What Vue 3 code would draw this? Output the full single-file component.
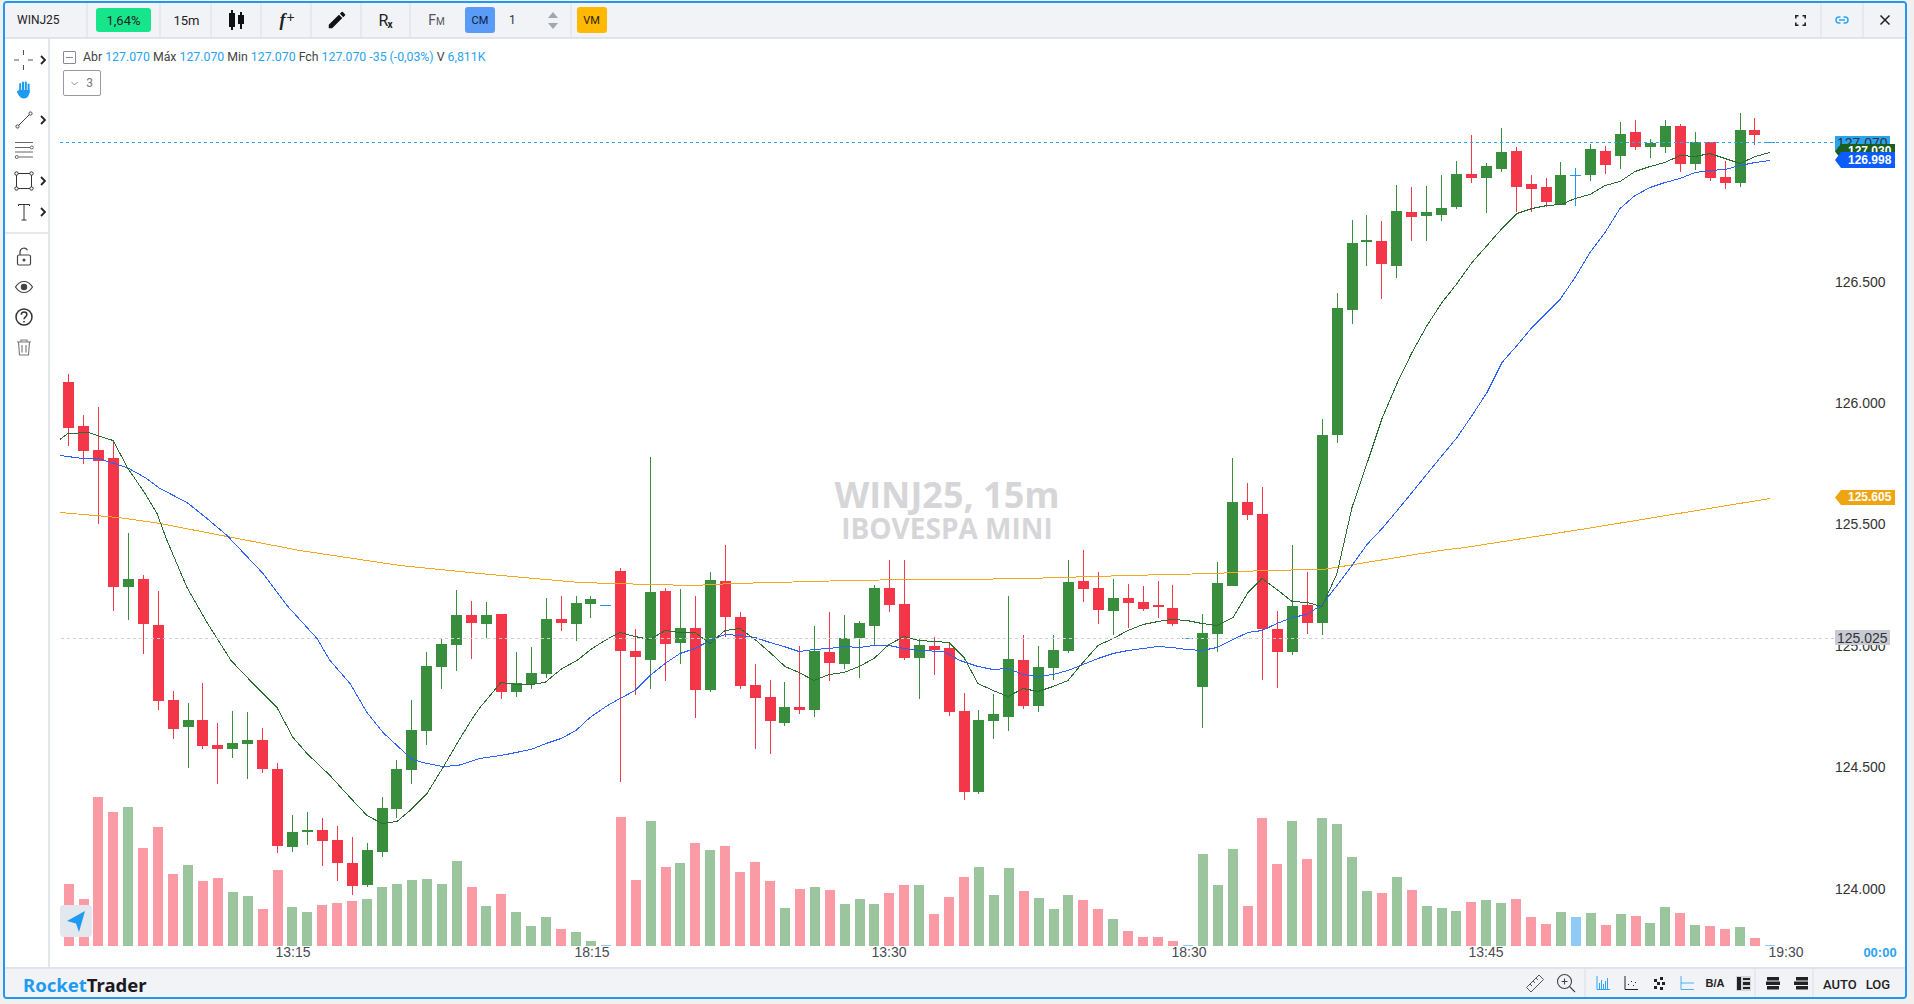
<script setup>
const raw = [
[374,446,382,428,'r'],[415,464,426,451,'r'],[407,524,450,461,'r'],[440,611,458,587,'r'],[533,620,579,587,'g'],[575,654,579,624,'r'],[591,710,625,701,'r'],
[691,739,700,729,'r'],[703,768,720,727,'g'],[683,749,720,746,'r'],[723,784,745,749,'r'],[711,758,743,749,'g'],[712,779,740,744,'g'],[728,773,740,769,'r'],
[763,853,769,846,'r'],[815,852,832,847,'g'],[812,845,830,832,'g'],[818,866,830,841,'r'],[826,881,840,863,'r'],[837,895,863,886,'r'],[843,887,850,885,'g'],
[797,857,808,852,'g'],[760,818,769,809,'g'],[700,784,730,770,'g'],[652,745,666,731,'g'],[638,689,644,667,'g'],[590,671,615,645,'g'],[601,659,615,623,'r'],
[602,638,615,624,'g'],[614,699,614,692,'r'],[652,697,683,692,'g'],[647,689,673,684,'g'],[598,678,619,674,'g'],[596,631,619,623,'r'],[596,641,603,624,'g'],
[596,618,599,604,'g'],[605,605,605,606,'b'],[568,782,571,651,'r'],[629,695,651,657,'r'],[457,689,592,660,'g'],[588,681,591,644,'r'],[589,664,628,643,'g'],
[596,718,628,690,'r'],[572,692,580,690,'g'],[545,637,581,617,'r'],[612,689,617,686,'r'],[664,749,685,698,'r'],[680,754,697,721,'r'],[682,726,707,723,'g'],
[646,714,707,710,'r'],[626,717,651,710,'g'],[612,681,652,663,'r'],[615,669,638,664,'g'],[621,678,623,638,'g'],[585,646,588,626,'g'],[560,612,588,605,'r'],
[560,660,604,658,'r'],[638,699,645,658,'g'],[637,675,646,650,'r'],[642,716,648,712,'r'],[693,800,711,792,'r'],[710,794,720,792,'g'],[694,739,714,721,'g'],
[596,731,659,717,'g'],[635,709,660,706,'r'],[646,712,667,706,'g'],[635,680,650,668,'g'],[560,653,582,651,'g'],[550,602,581,589,'r'],[572,624,588,610,'r'],
[579,635,598,611,'g'],[584,628,598,603,'r'],[586,611,602,609,'r'],[581,618,605,607,'r'],[585,626,608,624,'r'],[638,638,638,639,'b'],[614,728,633,687,'g'],
[562,652,583,634,'g'],[458,586,502,586,'g'],[483,520,502,515,'r'],[487,680,514,629,'r'],[611,688,629,652,'r'],[545,655,606,652,'g'],[572,634,605,623,'r'],
[419,635,435,623,'g'],[293,443,308,435,'g'],[220,324,243,310,'g'],[215,266,240,242,'g'],[221,299,241,264,'r'],[185,278,211,266,'g'],[187,241,212,217,'r'],
[186,241,212,216,'g'],[175,221,208,215,'g'],[161,209,174,207,'g'],[135,183,174,178,'r'],[163,213,166,178,'g'],[128,172,152,169,'g'],[147,212,151,187,'r'],
[175,212,184,189,'r'],[178,207,187,202,'r'],[162,205,175,205,'g'],[168,206,175,176,'b'],[144,181,149,175,'g'],[146,174,151,165,'r'],[122,169,134,156,'g'],
[120,150,132,147,'r'],[139,158,143,147,'g'],[120,153,126,147,'g'],[124,172,126,164,'r'],[132,170,142,164,'g'],[142,181,142,178,'r'],[161,189,177,183,'r'],
[113,187,130,183,'g'],[118,145,130,135,'r'],[142,142,142,143,'b']
]
const volTops = [884,899,797,812,807,848,827,874,865,881,878,892,896,909,870,907,912,905,903,901,899,887,884,880,879,884,861,887,
906,894,912,926,917,929,932,941,945,817,880,821,867,863,843,850,846,872,862,881,908,889,887,890,904,899,904,893,885,885,914,897,
877,867,895,868,891,898,909,895,900,909,919,931,937,937,941,945,854,885,849,906,818,864,821,859,818,824,857,891,893,877,890,906,908,
911,902,900,903,899,917,924,912,917,913,925,914,916,923,907,913,925,926,929,927,938,945]
const colors = { r: '#f43649', g: '#388e3c', b: '#2196f3' }

const candles = raw.map((r, i) => ({
  i,
  x: 68 + 15 * i - Math.floor((i + 4) / 13),
  wickTop: r[0], wickH: r[1] - r[0],
  bodyTop: r[2], bodyH: r[3] - r[2],
  color: colors[r[4]]
}))
const volumes = volTops.map((top, i) => ({
  i,
  x: 64 + 15 * i - Math.floor((i + 11) / 13),
  top, h: 946 - top,
  color: colors[raw[i][4]]
}))

const greenLine = '60,439 68,433 88,432 113,440 128,468 145,493 157,513 167,540 187,587 207,622 231,660 253,683 277,707 293,737 307,753 330,775 350,797 367,815 382,823 397,821 410,810 427,793 443,767 460,738 473,717 480,707 501,682 517,684 531,684 545,682 562,668 577,660 592,648 610,637 620,632 635,636 650,639 665,630 680,632 695,632 710,643 725,630 740,628 755,639 770,652 785,666 799,672 814,680 829,674 844,672 859,666 874,658 889,644 904,636 919,640 934,641 949,642 960,653 964,657 978,683 993,690 1008,696 1023,688 1038,691 1053,686 1068,680 1083,662 1098,645 1113,638 1128,630 1143,624 1158,621 1172,619 1187,620 1202,623 1217,625 1233,617 1248,592 1262,578 1277,589 1292,601 1307,602 1322,606 1337,573 1352,507 1368,460 1382,418 1397,383 1412,352 1427,325 1442,302 1457,283 1472,262 1487,245 1502,228 1517,213 1532,208 1547,205 1561,204 1575,198 1590,194 1605,185 1620,181 1635,171 1650,166 1665,162 1680,155 1695,156 1710,153 1725,158 1740,163 1755,156 1770,152'
const blueLine = '60,455 83,458 98,458 127,467 145,477 160,488 187,502 207,518 227,535 263,573 287,605 317,638 330,660 350,683 367,712 383,732 412,759 427,763 443,766 458,765 480,758 501,755 531,749 546,743 561,738 576,730 590,717 606,706 620,698 635,690 650,675 665,663 680,653 695,648 710,640 725,634 740,635 755,637 770,642 784,646 799,651 814,649 829,648 844,646 859,647 874,645 889,645 904,648 919,650 944,651 960,660 978,666 993,669 1008,668 1023,674 1038,676 1053,674 1068,670 1083,664 1098,658 1113,653 1128,650 1143,648 1158,646 1172,647 1187,649 1202,650 1217,647 1233,639 1248,632 1262,630 1277,623 1292,617 1307,614 1322,604 1337,585 1352,565 1367,544 1383,527 1403,503 1438,460 1457,437 1472,415 1487,392 1502,362 1517,345 1532,327 1560,299 1575,277 1590,252 1605,232 1620,208 1635,195 1650,187 1665,182 1680,178 1695,172 1710,170 1725,169 1740,165 1755,162 1770,160'
const orangeLine = '60,512 118,517 160,523 227,536 300,550 400,565 480,573 523,577 580,582 613,583 693,585 733,583 813,581 847,580 913,579 960,579 1027,578 1093,576 1167,574 1217,573 1260,570 1323,569 1360,563 1440,550 1465,547 1587,528 1709,508 1770,498'

const axis = [
  { t: '126.500', y: 287 }, { t: '126.000', y: 408 }, { t: '125.500', y: 529 },
  { t: '125.000', y: 651 }, { t: '124.500', y: 772 }, { t: '124.000', y: 894 }
]
const times = [
  { t: '13:15', x: 293 }, { t: '18:15', x: 592 }, { t: '13:30', x: 889 },
  { t: '18:30', x: 1189 }, { t: '13:45', x: 1486 }, { t: '19:30', x: 1786 }
]
const tags = [
  { t: '127.030', y: 144, h: 15, c: '#1b5e20' },
  { t: '126.998', y: 152, h: 16, c: '#0d5cff' },
  { t: '125.605', y: 490, h: 15, c: '#efa512' }
]
const tagPath = (y, h) => `M1835 ${y + h / 2}L1841 ${y}H1895V${y + h}H1841Z`
</script>

<template>
  <div class="page">
    <div class="frame">
      <header class="topbar">
        <div class="cell c-symbol"><span class="symbol">WINJ25</span></div>
        <div class="cell c-pct"><span class="pct">1,64%</span></div>
        <div class="cell c-tf"><span class="tf">15m</span></div>
        <div class="cell c-icon">
          <svg class="nudge" width="18" height="22" viewBox="0 0 18 22">
            <rect x="3" y="1" width="2" height="20" fill="#111" />
            <rect x="1" y="4" width="6" height="14" fill="#111" />
            <rect x="12" y="3" width="2" height="17" fill="#111" />
            <rect x="10" y="6" width="6" height="9" fill="#111" />
          </svg>
        </div>
        <div class="cell c-icon"><span class="fx"><i>f</i><b>+</b></span></div>
        <div class="cell c-icon">
          <svg class="nudge" width="22" height="22" viewBox="0 0 24 24"><path fill="#111" d="M3 17.25V21h3.75L17.81 9.94l-3.75-3.75L3 17.25zM20.71 7.04a1 1 0 0 0 0-1.41l-2.34-2.34a1 1 0 0 0-1.41 0l-1.83 1.83 3.75 3.75 1.83-1.83z" /></svg>
        </div>
        <div class="cell c-icon c-rx"><span class="rx">R<sub>x</sub></span></div>
        <div class="cell c-fm"><span class="fm">F<small>M</small></span></div>
        <div class="cell c-group">
          <span class="btn btn-cm">CM</span>
          <span class="qty">1</span>
          <span class="spin"><i class="up"></i><i class="down"></i></span>
        </div>
        <div class="cell c-vm"><span class="btn btn-vm">VM</span></div>
        <div class="spacer"></div>
        <div class="cell c-right">
          <svg width="11" height="11" viewBox="0 0 11 11" fill="none" stroke="#222" stroke-width="1.6"><path d="M.8 3.500V.8h2.700M7.500.8h2.700v2.700M10.200 7.500v2.700H7.500M3.500 10.200H.8V7.500" /></svg>
        </div>
        <div class="cell c-right">
          <svg width="14" height="8" viewBox="0 0 14 8" fill="none" stroke="#2ba6f3" stroke-width="1.500"><path d="M5.500 1H4a3 3 0 0 0 0 6h1.500M8.500 1H10a3 3 0 0 1 0 6H8.500M4 4h6" /></svg>
        </div>
        <div class="cell c-right c-last">
          <svg width="12" height="12" viewBox="0 0 12 12" fill="none" stroke="#222" stroke-width="1.5"><path d="M1.500 1.500l9 9M10.500 1.500l-9 9" /></svg>
        </div>
      </header>

      <div class="main">
        <aside class="rail">
          <div class="tool">
            <svg class="ico" viewBox="0 0 20 20" fill="none" stroke="#555" stroke-width="1"><path d="M0 10h5M14 10h5M9.500 0v5M9.500 15v5" /></svg>
            <svg class="chev" viewBox="0 0 6 10" fill="none" stroke="#222" stroke-width="1.8"><path d="M1 1l4 4-4 4" /></svg>
          </div>
          <div class="tool">
            <svg class="ico" viewBox="0 0 20 20" fill="#1e9af0">
              <rect x="5.200" y="3" width="2" height="10" rx="1" />
              <rect x="8" y="1.500" width="2" height="11" rx="1" />
              <rect x="10.800" y="1.500" width="2" height="11" rx="1" />
              <rect x="13.600" y="3.500" width="2" height="10" rx="1" />
              <path d="M5 10h10.600c.2 5-2.200 8.500-5.600 8.500C7 18.500 5.600 16.800 3.800 13.800 2.600 11.800 3 10.600 4 10.800z" />
            </svg>
          </div>
          <div class="tool">
            <svg class="ico" viewBox="0 0 20 20" fill="#fff" stroke="#444" stroke-width="1"><path d="M4 16L16 4" /><circle cx="3.500" cy="16.500" r="1.600" /><circle cx="16.500" cy="3.500" r="1.600" /></svg>
            <svg class="chev" viewBox="0 0 6 10" fill="none" stroke="#222" stroke-width="1.8"><path d="M1 1l4 4-4 4" /></svg>
          </div>
          <div class="tool">
            <svg class="ico" viewBox="0 0 20 20" fill="#fff" stroke="#666" stroke-width="1"><path d="M1 2.500h18M1 7.500h15M1 12h18M5 17h14" /><circle cx="17.800" cy="7.500" r="1.500" /><circle cx="2.800" cy="17" r="1.500" /></svg>
          </div>
          <div class="tool t-down">
            <svg class="ico" viewBox="0 0 20 20" fill="#fff" stroke="#333" stroke-width="1"><rect x="2.500" y="2.500" width="15" height="15" /><circle cx="2.500" cy="2.500" r="1.700" /><circle cx="17.500" cy="2.500" r="1.700" /><circle cx="2.500" cy="17.500" r="1.700" /><circle cx="17.500" cy="17.500" r="1.700" /></svg>
            <svg class="chev" viewBox="0 0 6 10" fill="none" stroke="#222" stroke-width="1.8"><path d="M1 1l4 4-4 4" /></svg>
          </div>
          <div class="tool t-down">
            <svg class="ico" viewBox="0 0 20 20" fill="none" stroke="#333" stroke-width="1"><path d="M4.500 4V2.500h11V4M10 2.500V18M7.500 18h5" /></svg>
            <svg class="chev" viewBox="0 0 6 10" fill="none" stroke="#222" stroke-width="1.8"><path d="M1 1l4 4-4 4" /></svg>
          </div>
          <div class="sep"></div>
          <div class="tool">
            <svg class="ico" viewBox="0 0 20 20" fill="none" stroke="#444" stroke-width="1.200"><rect x="3.500" y="8" width="13" height="10" rx="1.500" /><path d="M6 8V5a4 4 0 0 1 7.500-1.800" /><circle cx="10" cy="13" r=".9" fill="#444" /></svg>
          </div>
          <div class="tool">
            <svg class="ico" viewBox="0 0 20 20" fill="none" stroke="#444" stroke-width="1.200"><path d="M1.500 10C4 6 7 4.500 10 4.500S16 6 18.500 10C16 14 13 15.500 10 15.500S4 14 1.500 10z" /><circle cx="10" cy="10" r="2.600" fill="#444" /></svg>
          </div>
          <div class="tool">
            <svg class="ico" viewBox="0 0 20 20" fill="none" stroke="#333" stroke-width="1.500"><circle cx="10" cy="10" r="8" /><path d="M7.300 7.800c0-1.700 1.200-2.800 2.800-2.800s2.800 1 2.800 2.500c0 2.300-2.900 2.300-2.900 4.700" /><path d="M10 14v1.400" /></svg>
          </div>
          <div class="tool">
            <svg class="ico" viewBox="0 0 20 20" fill="none" stroke="#777" stroke-width="1.100"><path d="M3 5h14M7 5V3h6v2M4.500 5l1 13h9l1-13M8 8v7.500M12 8v7.500" /></svg>
          </div>
        </aside>

        <div class="chart">
          <svg class="canvas" viewBox="50 39 1855 928" width="1855" height="928">
            <text class="wm1" x="947" y="508" text-anchor="middle">WINJ25, 15m</text>
            <text class="wm2" x="947" y="539" text-anchor="middle">IBOVESPA MINI</text>

            <g shape-rendering="crispEdges">
              <rect v-for="v in volumes" :key="'v' + v.i" :x="v.x" :y="v.top" width="10" :height="v.h" :fill="v.color" fill-opacity=".5" />
              <g v-for="c in candles" :key="'c' + c.i">
                <rect :x="c.x" :y="c.wickTop" width="1" :height="c.wickH" :fill="c.color" />
                <rect :x="c.x - 5" :y="c.bodyTop" width="11" :height="c.bodyH" :fill="c.color" />
              </g>
              <g transform="translate(0 .5)" fill="none" stroke-width="1">
                <polyline :points="orangeLine" stroke="#f5a623" />
                <polyline :points="blueLine" stroke="#2962ff" />
                <polyline :points="greenLine" stroke="#2b6e2f" />
              </g>
              <line x1="60" y1="142.500" x2="1835" y2="142.500" stroke="#29a9f5" stroke-dasharray="3 3" />
              <line x1="61" y1="638.500" x2="1835" y2="638.500" stroke="#cfcfd4" stroke-dasharray="3 3" />
            </g>

            <text v-for="a in axis" :key="a.t" class="axis" x="1835" :y="a.y">{{ a.t }}</text>
            <text v-for="t in times" :key="t.t" class="time" :x="t.x" y="957" text-anchor="middle">{{ t.t }}</text>
            <text class="clock" x="1880" y="957" text-anchor="middle">00:00</text>

            <rect x="1835" y="136" width="55" height="15" fill="#2aa3f0" />
            <text class="axis" x="1837" y="148">127.070</text>
            <g v-for="tag in tags" :key="tag.t">
              <path :d="tagPath(tag.y, tag.h)" :fill="tag.c" />
              <text class="tagtext" x="1848" :y="tag.y + tag.h - 4">{{ tag.t }}</text>
            </g>
            <rect x="1835" y="630" width="55" height="15" fill="#c8cbd3" />
            <text class="axis" x="1837" y="643">125.025</text>
          </svg>

          <div class="legend">
            <span class="collapse"></span>
            <span class="ohlc">
              Abr <em>127.070</em> Máx <em>127.070</em> Min <em>127.070</em> Fch <em>127.070 -35 (-0,03%)</em> V <em>6,811K</em>
            </span>
          </div>
          <div class="more">
            <svg width="7" height="5" viewBox="0 0 7 5" fill="none" stroke="#888" stroke-width="1"><path d="M.5 1l3 3 3-3" /></svg>
            <span>3</span>
          </div>
          <div class="nav">
            <svg width="20" height="22" viewBox="0 0 20 22"><path fill="#1e9af0" d="M1 11L19 1l-6 21-3-8.500z" /></svg>
          </div>
        </div>
      </div>

      <footer class="bottombar">
        <div class="logo"><span class="rocket">Rocket</span><span>Trader</span></div>
        <div class="spacer"></div>
        <div class="bcell b-tools">
          <svg width="20" height="20" viewBox="0 0 20 20" fill="none" stroke="#555" stroke-width="1"><path d="M1.500 14.500L14 2l4.500 4.500L6 19zM5 11l2 2M8 8l2 2M11 5l2 2" /></svg>
          <svg width="20" height="20" viewBox="0 0 20 20" fill="none" stroke="#444" stroke-width="1.100"><circle cx="8.500" cy="8.500" r="7" /><path d="M13.500 13.500l5.500 5.500M8.500 5.500v6M5.500 8.500h6" /></svg>
        </div>
        <div class="bcell b-chart">
          <svg width="14" height="14" viewBox="0 0 14 14" fill="none" stroke="#2ba6f3" stroke-width="1"><path d="M1 0v13.500h13M3.500 7v6M5.500 4v9M7.500 8v5M9.500 5v8M11.500 2v11" /></svg>
          <svg width="14" height="14" viewBox="0 0 14 14" fill="none" stroke="#222" stroke-width="1"><path d="M1 0v13.500h13M4 8l1 1M7 5l1 1M9 9l1 1M11 6l1 1" /></svg>
          <svg width="14" height="14" viewBox="0 0 14 14" fill="#222"><rect x="2" y="3" width="3" height="3" /><rect x="8" y="1" width="3" height="3" /><rect x="5" y="6" width="3" height="3" /><rect x="10" y="6" width="3" height="3" /><rect x="2" y="10" width="3" height="3" /><rect x="8" y="11" width="3" height="3" /></svg>
          <svg width="14" height="14" viewBox="0 0 14 14" fill="none" stroke="#2ba6f3" stroke-width="1"><path d="M1 0v13.500h13M1 7h13" stroke-opacity=".85" /></svg>
          <span class="ba">B/A</span>
          <span class="panel"><svg width="13" height="13" viewBox="0 0 13 13" fill="#222"><rect x="0" y="0" width="4" height="13" /><rect x="6" y="1" width="7" height="2" /><rect x="6" y="5" width="7" height="3" /><rect x="6" y="10" width="7" height="2" /></svg></span>
        </div>
        <div class="bcell b-stack">
          <svg width="14" height="13" viewBox="0 0 14 13" fill="#222"><rect x="1" y="0" width="12" height="3.500" /><rect x="0" y="4.500" width="14" height="3.500" /><rect x="1" y="9" width="12" height="3.500" /></svg>
          <svg width="14" height="13" viewBox="0 0 14 13" fill="#222"><rect x="2" y="0" width="12" height="3.500" /><rect x="0" y="4.500" width="14" height="3.500" /><rect x="2" y="9" width="12" height="3.500" /></svg>
        </div>
        <div class="bcell b-scale"><span>AUTO</span><span>LOG</span></div>
      </footer>
    </div>
  </div>
</template>

<style>
html, body { margin: 0; padding: 0; background: #f0f0f0; }
</style>

<style scoped>
.page {
  width: 1914px;
  height: 1004px;
  box-sizing: border-box;
  padding: 1px 7px 5px 3px;
  background: #f0f0f0;
  overflow: hidden;
  font-family: Roboto, "Liberation Sans", sans-serif;
  color: #222;
}
.frame {
  height: 100%;
  box-sizing: border-box;
  border: 2px solid #2196f3;
  border-radius: 4px;
  background: #fff;
  display: flex;
  flex-direction: column;
  overflow: hidden;
}
.topbar {
  flex: 0 0 36px;
  box-sizing: border-box;
  display: flex;
  background: #f2f3f7;
  border-bottom: 2px solid #e0e3eb;
}
.cell {
  box-sizing: border-box;
  height: 34px;
  border-right: 2px solid #e6e8ee;
  display: flex;
  align-items: center;
  justify-content: center;
  flex: none;
}
.c-symbol { width: 83px; justify-content: flex-start; padding-left: 12px; }
.symbol { font-size: 12px; }
.c-pct { width: 73px; }
.pct {
  width: 55px;
  height: 24px;
  display: flex;
  align-items: center;
  justify-content: center;
  background: #17e58b;
  border-radius: 3px;
  font-size: 13px;
}
.c-tf { width: 51px; padding-left: 2px; }
.tf { font-size: 13px; }
.c-icon { width: 50px; }
.nudge { margin-left: 2px; }
.fx { font-family: "Liberation Serif", serif; font-size: 18px; color: #222; margin-left: 2px; }
.fx i { font-weight: 700; }
.fx b { font-family: "Liberation Sans", sans-serif; font-size: 14px; font-weight: 400; vertical-align: 4px; margin-left: 1px; }
.c-rx { width: 49px; }
.rx { font-size: 16px; color: #222; font-family: Roboto, sans-serif; }
.rx sub { font-size: 10px; font-weight: 700; vertical-align: -2px; line-height: 0; margin-left: -1px; }
.c-fm { width: 51px; border-right: 0; }
.fm { font-size: 14px; color: #555; }
.fm small { font-size: 10px; }
.c-group { width: 110px; justify-content: flex-start; padding-left: 3px; }
.btn {
  width: 30px;
  height: 26px;
  border-radius: 3px;
  display: flex;
  align-items: center;
  justify-content: center;
  font-size: 11px;
}
.btn-cm { background: #5b9bf8; color: #0c1c33; }
.btn-vm { background: #ffb900; color: #2e2200; }
.qty { font-size: 12px; margin-left: 14px; color: #333; }
.spin {
  margin-left: 32px;
  display: flex;
  flex-direction: column;
  gap: 5px;
}
.spin i { display: block; width: 0; height: 0; border-left: 5px solid transparent; border-right: 5px solid transparent; }
.spin .up { border-bottom: 6px solid #a2a6ad; }
.spin .down { border-top: 6px solid #a2a6ad; }
.c-vm { width: 39px; border-right: 0; }
.spacer { flex: 1; }
.c-right { width: 42px; border-right: 2px solid #e6e8ee; }
.c-last { width: 41px; border-right: 0; }
.main { flex: 1; display: flex; min-height: 0; }
.rail {
  flex: 0 0 45px;
  box-sizing: border-box;
  border-right: 2px solid #e0e6ec;
  padding-top: 6px;
  background: #fff;
}
.tool {
  height: 30px;
  display: flex;
  align-items: center;
  padding-left: 9px;
}
.t-down { margin-top: 1px; }
.ico { width: 20px; height: 20px; flex: none; }
.chev { width: 6px; height: 10px; margin-left: 6px; flex: none; }
.sep { height: 2px; background: #e6e8ee; margin: 5px 0 8px; }
.chart { position: relative; flex: 1; overflow: hidden; }
.canvas { display: block; }
.wm1 { font-family: "Open Sans", sans-serif; font-weight: 700; font-size: 36px; fill: #d6d6d9; }
.wm2 { font-family: "Open Sans", sans-serif; font-weight: 700; font-size: 28px; fill: #d6d6d9; }
.axis { font-family: "Liberation Sans", sans-serif; font-size: 14px; fill: #333; }
.time { font-family: "Liberation Sans", sans-serif; font-size: 14px; fill: #4a4a55; }
.clock { font-family: "Liberation Sans", sans-serif; font-size: 13px; font-weight: 700; fill: #2aa3f0; }
.tagtext { font-family: "Liberation Sans", sans-serif; font-size: 12px; font-weight: 700; fill: #fff; }
.legend {
  position: absolute;
  left: 13px;
  top: 10px;
  height: 16px;
  display: flex;
  align-items: center;
  gap: 7px;
  font-size: 12.300px;
  color: #444;
  white-space: nowrap;
}
.collapse {
  width: 11px;
  height: 11px;
  border: 1px solid #8a8a94;
  border-radius: 1px;
  position: relative;
  flex: none;
}
.collapse::after {
  content: "";
  position: absolute;
  left: 2px;
  right: 2px;
  top: 5px;
  height: 1px;
  background: #8a8a94;
}
.ohlc em { font-style: normal; color: #2aa3f0; }
.more {
  position: absolute;
  left: 13px;
  top: 31px;
  width: 38px;
  height: 26px;
  box-sizing: border-box;
  border: 1px solid #9a9aa5;
  border-radius: 2px;
  display: flex;
  align-items: center;
  justify-content: center;
  gap: 8px;
  font-size: 12px;
  color: #777;
}
.nav {
  position: absolute;
  left: 10px;
  top: 866px;
  width: 32px;
  height: 32px;
  background: #e3e7ee;
  border-radius: 4px;
  display: flex;
  align-items: center;
  justify-content: center;
}
.bottombar {
  flex: 0 0 30px;
  box-sizing: border-box;
  display: flex;
  align-items: center;
  background: #f2f3f7;
  border-top: 2px solid #e0e3eb;
}
.logo {
  font-family: "Noto Sans", sans-serif;
  font-weight: 700;
  font-size: 18.500px;
  color: #1a1a22;
  padding: 2px 0 0 18px;
}
.rocket { color: #1d9bf0; }
.bcell {
  box-sizing: border-box;
  height: 28px;
  display: flex;
  align-items: center;
  border-right: 2px solid #e6e8ee;
  flex: none;
}
.b-tools { gap: 11px; padding-right: 8px; }
.b-chart { width: 170px; gap: 14px; padding-left: 10px; }
.ba {
  width: 14px;
  display: flex;
  justify-content: center;
  white-space: nowrap;
  font-family: "Liberation Sans", sans-serif;
  font-size: 11px;
  font-weight: 700;
  color: #222;
}
.panel { display: flex; padding: 1px; background: #d4d4d8; }
.b-stack { width: 58px; gap: 14px; padding-left: 10px; }
.b-scale {
  width: 91px;
  border-right: 0;
  gap: 9px;
  padding: 3px 0 0 9px;
  font-size: 13px;
  font-weight: 500;
  color: #222;
}
</style>
